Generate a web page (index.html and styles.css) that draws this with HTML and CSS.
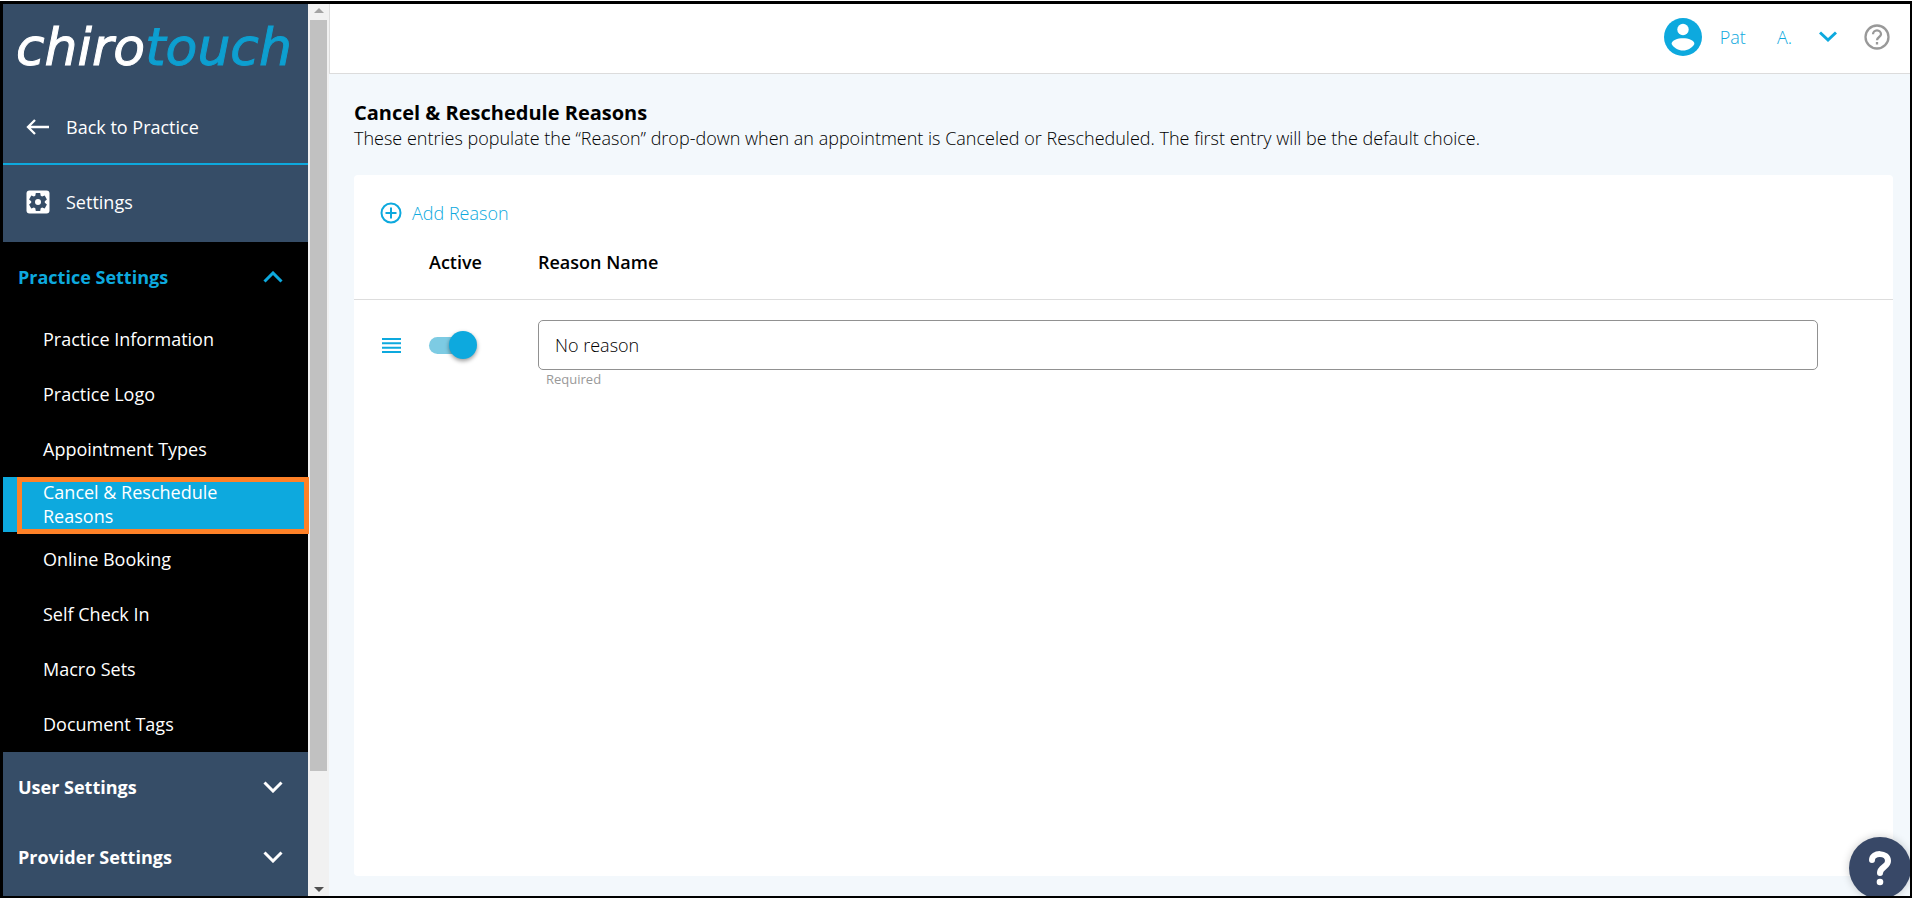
FILE: index.html
```html
<!DOCTYPE html>
<html lang="en">
<head>
<meta charset="utf-8">
<title>Cancel &amp; Reschedule Reasons</title>
<link rel="stylesheet" href="styles.css">
</head>
<body>
<div class="app">
  <aside class="sidebar">
    <a class="logo" href="#"><span>chiro</span><span class="logo-accent">touch</span></a>
    <a class="side-link back" href="#">
      <svg width="24" height="24" viewBox="0 0 24 24" fill="none" stroke="currentColor" stroke-width="2.300"><path d="M23 12H2M9 5l-7 7 7 7"/></svg>
      Back to Practice
    </a>
    <a class="side-link settings" href="#">
      <svg width="24" height="24" viewBox="0 0 24 24"><rect x="0.500" y="0.500" width="23" height="23" rx="3" fill="#fff"/><path fill="#364d67" d="M9.800 3h4.400l.5 2.700 1.400.8 2.600-.9 2.200 3.800-2.100 1.800v1.600l2.100 1.800-2.200 3.800-2.600-.9-1.400.8-.5 2.700H9.800l-.5-2.700-1.400-.8-2.600.9-2.200-3.800 2.100-1.800v-1.600L3.100 9.400l2.200-3.800 2.600.9 1.400-.8z"/><circle cx="12" cy="12" r="3" fill="#fff"/></svg>
      Settings
    </a>
    <nav class="menu">
      <section class="group open">
        <button class="group-head" type="button" aria-expanded="true">Practice Settings
          <svg width="20" height="12" viewBox="0 0 20 12" fill="none" stroke="currentColor" stroke-width="3"><path d="M1.500 10.500 10 2l8.500 8.500"/></svg>
        </button>
        <ul>
          <li><a href="#">Practice Information</a></li>
          <li><a href="#">Practice Logo</a></li>
          <li><a href="#">Appointment Types</a></li>
          <li class="current"><a href="#" aria-current="page">Cancel &amp; Reschedule Reasons</a></li>
          <li><a href="#">Online Booking</a></li>
          <li><a href="#">Self Check In</a></li>
          <li><a href="#">Macro Sets</a></li>
          <li><a href="#">Document Tags</a></li>
        </ul>
      </section>
      <button class="group-head" type="button" aria-expanded="false">User Settings
        <svg width="20" height="12" viewBox="0 0 20 12" fill="none" stroke="currentColor" stroke-width="3"><path d="M1.500 1.500 10 10l8.500-8.500"/></svg>
      </button>
      <button class="group-head" type="button" aria-expanded="false">Provider Settings
        <svg width="20" height="12" viewBox="0 0 20 12" fill="none" stroke="currentColor" stroke-width="3"><path d="M1.500 1.500 10 10l8.500-8.500"/></svg>
      </button>
    </nav>
  </aside>
  <div class="scrollbar" aria-hidden="true">
    <svg width="10" height="16" viewBox="0 0 10 16"><path d="M0 9l5-5 5 5z" fill="#a3a3a3"/></svg>
    <div class="track"><div class="thumb"></div></div>
    <svg width="10" height="16" viewBox="0 0 10 16"><path d="M0 7l5 5 5-5z" fill="#505050"/></svg>
  </div>
  <div class="content">
    <header class="topbar">
      <button class="user" type="button">
        <svg width="38" height="38" viewBox="0 0 38 38"><circle cx="19" cy="19" r="19" fill="#0da9de"/><circle cx="19" cy="11.500" r="5.700" fill="#fff"/><path fill="#fff" d="M7.600 26c0-3.800 6-5.700 11.400-5.700S30.400 22.200 30.400 26c-2.400 3.900-6.600 6.600-11.400 6.600S10 29.900 7.600 26z"/></svg>
        <span class="first-name">Pat</span><span>A.</span>
        <svg width="18" height="12" viewBox="0 0 18 12" fill="none" stroke="#0da9de" stroke-width="3"><path d="M1 1.500 9 9l8-7.500"/></svg>
      </button>
      <button class="help" type="button" aria-label="Help">
        <svg width="26" height="26" viewBox="0 0 26 26" fill="none" stroke="#999" stroke-width="2.300"><circle cx="13" cy="13" r="11.500"/><path d="M9 10.300a4 4 0 0 1 8 0c0 2.700-4 2.700-4 6"/><path d="M13 18v2.500"/></svg>
      </button>
    </header>
    <main>
      <h1>Cancel &amp; Reschedule Reasons</h1>
      <p class="intro">These entries populate the “Reason” drop-down when an appointment is Canceled or Rescheduled. The first entry will be the default choice.</p>
      <section class="panel">
        <button class="add" type="button">
          <svg width="22" height="22" viewBox="0 0 22 22" fill="none" stroke="#0da9de" stroke-width="2"><circle cx="11" cy="11" r="9.500"/><path d="M11 5.500v11M5.500 11h11"/></svg>
          Add Reason
        </button>
        <table>
          <thead><tr><th class="col-drag"></th><th class="col-active">Active</th><th>Reason Name</th></tr></thead>
          <tbody><tr>
            <td class="col-drag"><svg width="19" height="15" viewBox="0 0 19 15" fill="#0da9de"><path d="M0 0h19v2H0zM0 4.300h19v2H0zM0 8.700h19v2H0zM0 13h19v2H0z"/></svg></td>
            <td class="col-active"><input class="toggle" type="checkbox" aria-label="Active" checked></td>
            <td><input class="reason" id="reason" type="text" value="No reason" aria-label="Reason Name" aria-describedby="hint"><small id="hint">Required</small></td>
          </tr></tbody>
        </table>
      </section>
    </main>
    <button class="chat" type="button" aria-label="Support">
      <svg width="24" height="36" viewBox="0 0 24 36" fill="none" stroke="#fff" stroke-width="6" stroke-linecap="round"><path d="M4 10c0-8 16-8 16 1 0 6-8 6-8 12"/><circle cx="12" cy="32" r="3.300" fill="#fff" stroke="none"/></svg>
    </button>
  </div>
</div>
</body>
</html>
```
FILE: styles.css
```css
* { box-sizing: border-box; }
body { margin: 0; padding-top: 1px; height: 100vh; font-family: "Open Sans", "Noto Sans", sans-serif; font-size: 18px; font-weight: 300; color: #000; overflow: hidden; }
button { margin: 0; padding: 0; border: 0; background: none; font: inherit; color: inherit; cursor: pointer; }
a { color: inherit; text-decoration: none; }
svg { display: block; flex: none; }

.app { display: flex; height: 100%; border: solid #000; border-width: 3px 2px 2px 3px; overflow: hidden; }

.sidebar { position: relative; z-index: 1; flex: none; width: 305px; background: #364d67; color: #fff; font-weight: 400; }
.logo { display: block; height: 84px; padding: 13px 0 0 13px; font: italic 52px/60px "DejaVu Sans", sans-serif; -webkit-text-stroke: 1px; }
.logo-accent { color: #0d9fd0; }
.side-link { display: flex; align-items: center; gap: 16px; height: 77px; padding: 0 23px; }
.back { padding-top: 2px; border-bottom: 2px solid #0da9de; }
.settings { padding-bottom: 4px; }
.group.open { background: #000; }
.group.open .group-head { color: #0da9de; }
.group-head { display: flex; align-items: center; justify-content: space-between; width: 100%; height: 70px; padding: 0 25px 0 15px; font-weight: 700; }
.group ul { margin: 0; padding: 0; list-style: none; }
.group a { display: flex; align-items: center; height: 55px; padding: 0 60px 2px 40px; line-height: 24px; }
.current { position: relative; background: #0da9de; }
.current::after { content: ""; position: absolute; inset: 0 -1px -2px 14px; border: 5px solid #ff8127; }

.scrollbar { flex: none; display: flex; flex-direction: column; align-items: center; width: 21px; background: #f1f1f1; }
.track { flex: 1; width: 17px; }
.thumb { height: 87.3%; background: #c1c1c1; }

.content { position: relative; flex: 1; display: flex; flex-direction: column; min-width: 0; background: #f3f8fc; }
.topbar { display: flex; flex: none; align-items: center; justify-content: flex-end; gap: 27px; height: 70px; padding: 0 20px 4px 0; background: #fff; border: solid #dcdcdc; border-width: 0 0 1px 1px; color: #0da9de; }
.user { display: flex; align-items: center; gap: 27px; }
.user > svg:first-child { margin-right: -9px; }
.first-name { margin-right: 4px; }

main { flex: 1; display: flex; flex-direction: column; padding: 25px 17px 20px 25px; }
h1 { margin: 0; font-size: 20px; line-height: 27px; font-weight: 700; }
.intro { margin: 0 0 25px; line-height: 24px; }
.panel { flex: 1; padding-top: 24px; background: #fff; border-radius: 4px; }
.add { display: flex; align-items: center; gap: 10px; margin-left: 26px; line-height: 28px; color: #0da9de; }
table { width: 100%; border-collapse: collapse; table-layout: fixed; }
th { height: 72px; padding: 23px 0 0; border-bottom: 1px solid #ddd; text-align: left; vertical-align: top; line-height: 24px; font-weight: 600; }
td { padding: 20px 75px 0 0; vertical-align: top; }
.col-drag { width: 75px; }
td.col-drag { padding: 38px 0 0 28px; }
.col-active { width: 109px; }
td.col-active { padding: 31px 0 0; }
.toggle { position: relative; display: block; appearance: none; width: 48px; height: 28px; margin: 0; }
.toggle::before { content: ""; position: absolute; inset: 6px 4px 5px 0; border-radius: 9px; background: #7dcbe3; }
.toggle::after { content: ""; position: absolute; right: 0; top: 0; width: 28px; height: 28px; border-radius: 50%; background: #0da9de; box-shadow: 0 2px 4px rgba(0, 0, 0, .4); }
.reason { display: block; width: 100%; height: 50px; padding: 0 16px; border: 1px solid #919191; border-radius: 5px; font: inherit; color: #000; background: #fff; }
small { display: block; padding-left: 8px; font-size: 13px; line-height: 18px; font-weight: 400; color: #999; }

.chat { position: absolute; right: -1px; bottom: -3px; display: grid; place-items: center; width: 62px; height: 62px; border-radius: 50%; background: #384867; box-shadow: 0 0 8px rgba(0, 0, 0, .2); }
```
